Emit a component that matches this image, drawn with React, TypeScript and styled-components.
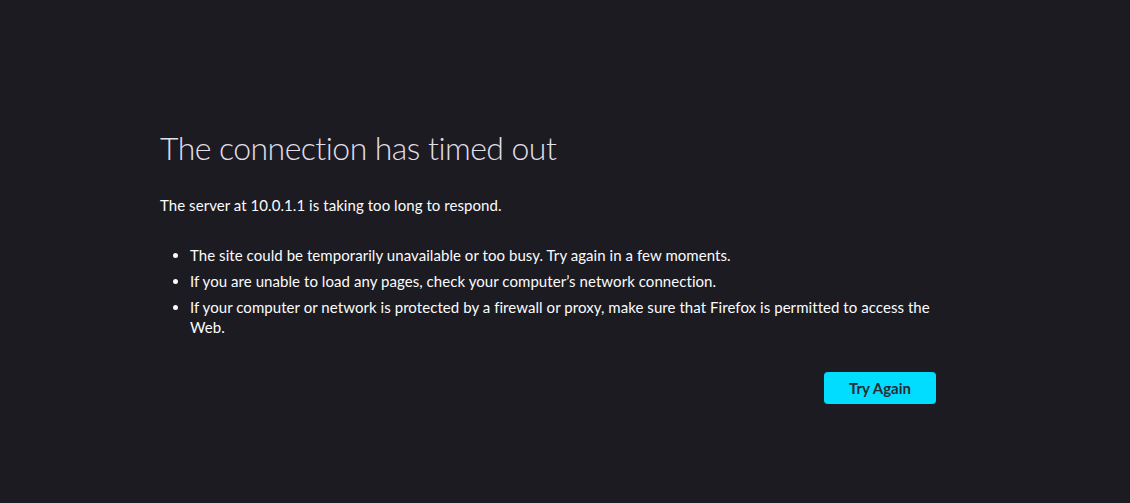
import React from "react";
import styled, { createGlobalStyle } from "styled-components";

const Global = createGlobalStyle`
  html, body { margin: 0; padding: 0; background: #1c1b22; }
  body { font-family: Lato, "Open Sans", sans-serif; color: #fbfbfe; }
`;

const Page = styled.div`
  min-height: 503px;
  box-sizing: border-box;
  padding: 126px 0 0 160px;
`;

const Container = styled.main`
  width: 776px;
  font-size: 15px;
  line-height: 20px;
  letter-spacing: 0.06px;
`;

const Title = styled.h1`
  margin: 0 0 25px;
  font-size: 32px;
  line-height: 44px;
  font-weight: 300;
  letter-spacing: -0.55px;
  color: #e0dfe6;
`;

const Intro = styled.p`
  margin: 0 0 30px;
`;

const List = styled.ul`
  margin: 0;
  padding-left: 30px;
`;

const Item = styled.li`
  margin-bottom: 6px;
`;

const Actions = styled.div`
  display: flex;
  justify-content: flex-end;
  margin-top: 35px;
`;

const Button = styled.button`
  width: 112px;
  height: 32px;
  border: none;
  border-radius: 4px;
  background: #00ddff;
  color: #2b2a33;
  font-family: inherit;
  font-size: 15px;
  font-weight: 700;
  cursor: pointer;
`;

export default function App() {
  return (
    <>
      <Global />
      <Page>
        <Container>
          <Title>The connection has timed out</Title>
          <Intro>The server at 10.0.1.1 is taking too long to respond.</Intro>
          <List>
            <Item>The site could be temporarily unavailable or too busy. Try again in a few moments.</Item>
            <Item>If you are unable to load any pages, check your computer’s network connection.</Item>
            <Item>If your computer or network is protected by a firewall or proxy, make sure that Firefox is permitted to access the Web.</Item>
          </List>
          <Actions>
            <Button>Try Again</Button>
          </Actions>
        </Container>
      </Page>
    </>
  );
}
